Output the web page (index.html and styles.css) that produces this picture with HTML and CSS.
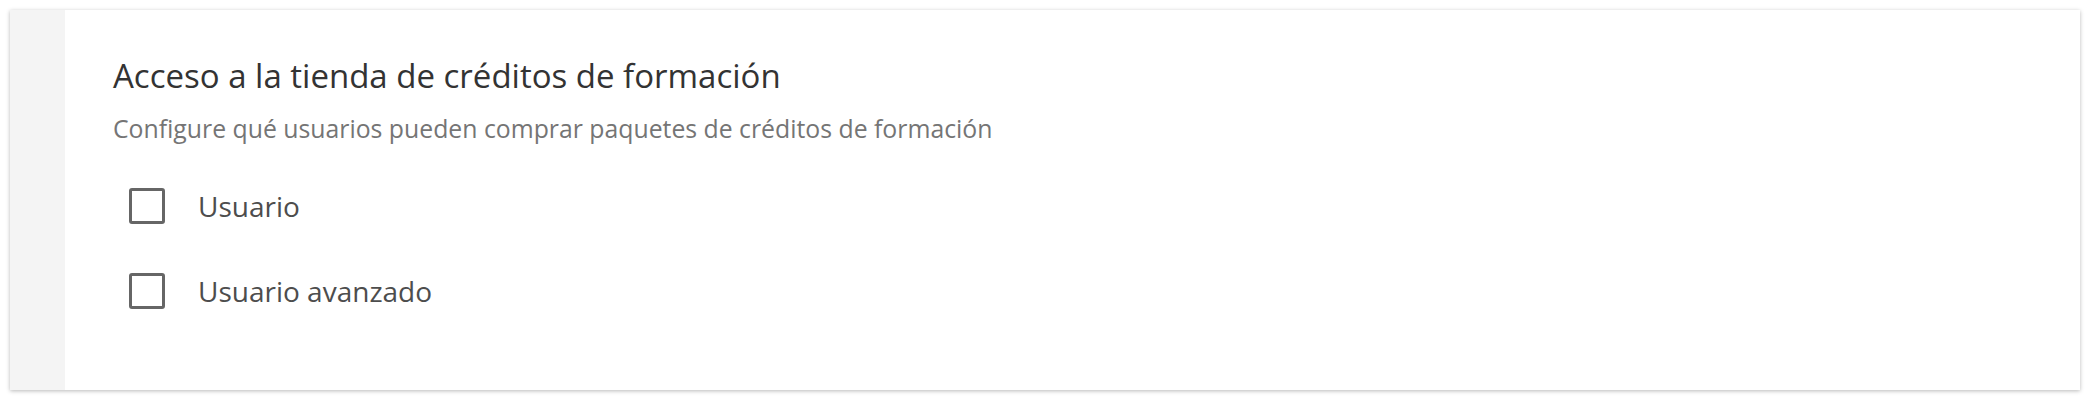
FILE: index.html
```html
<!DOCTYPE html>
<html lang="es">
<head>
<meta charset="utf-8">
<title>Acceso a la tienda de créditos de formación</title>
<link rel="stylesheet" href="styles.css">
</head>
<body>
  <section class="card">
    <div class="card-strip"></div>
    <div class="card-body">
      <h2 class="card-title">Acceso a la tienda de créditos de formación</h2>
      <p class="card-subtitle">Configure qué usuarios pueden comprar paquetes de créditos de formación</p>
      <ul class="options">
        <li class="option">
          <span class="checkbox"></span>
          <span class="option-label">Usuario</span>
        </li>
        <li class="option">
          <span class="checkbox"></span>
          <span class="option-label">Usuario avanzado</span>
        </li>
      </ul>
    </div>
  </section>
</body>
</html>
```

FILE: styles.css
```css
html, body {
  margin: 0;
  padding: 0;
  background: #ffffff;
}

body {
  font-family: "Open Sans", "Noto Sans", sans-serif;
  padding: 10px;
}

.card {
  display: flex;
  width: 2070px;
  height: 380px;
  background: #ffffff;
  box-shadow: 0 1px 4px rgba(0, 0, 0, 0.28);
}

.card-strip {
  width: 55px;
  flex: 0 0 55px;
  background: #f4f4f4;
}

.card-body {
  flex: 1;
  padding: 43px 0 0 48px;
}

.card-title {
  margin: 0;
  font-size: 33px;
  line-height: 46px;
  font-weight: 500;
  color: #333333;
}

.card-subtitle {
  margin: 13px 0 0;
  font-size: 24.8px;
  line-height: 32px;
  color: #757575;
}

.options {
  list-style: none;
  margin: 44px 0 0;
  padding: 0 0 0 16px;
  display: flex;
  flex-direction: column;
  gap: 49px;
}

.option {
  display: flex;
  align-items: center;
  gap: 33px;
  height: 36px;
}

.checkbox {
  box-sizing: border-box;
  width: 36px;
  height: 36px;
  border: 3px solid #666666;
  border-radius: 3px;
  background: #ffffff;
}

.option-label {
  font-size: 28px;
  line-height: 36px;
  color: #4d4d4d;
}
```
